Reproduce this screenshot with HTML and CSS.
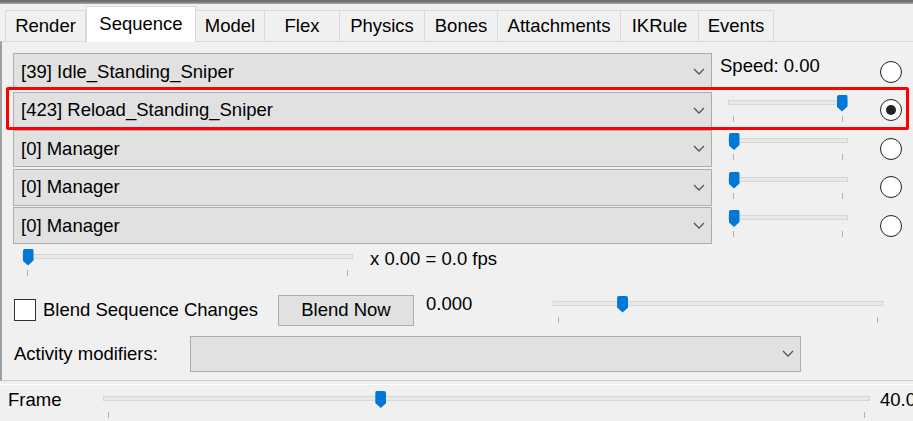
FILE: index.html
```html
<!DOCTYPE html>
<html>
  <head>
    <meta charset="UTF-8" />
    <title>Sequence</title>
    <link rel="stylesheet" href="styles.css">
  </head>
  <body>
    <div class="window">
      <div class="title-edge"></div>
      <div class="tabs">
        <div class="tab">Render</div>
        <div class="tab active">Sequence</div>
        <div class="tab">Model</div>
        <div class="tab">Flex</div>
        <div class="tab">Physics</div>
        <div class="tab">Bones</div>
        <div class="tab">Attachments</div>
        <div class="tab">IKRule</div>
        <div class="tab">Events</div>
      </div>
      <div class="page">
        <div class="seq-list">
          <div class="seq-row">
            <div class="combo">
              <span>[39] Idle_Standing_Sniper</span>
              <svg class="chevron" width="12" height="7" viewBox="0 0 12 7"><polyline points="1,1 6,6 11,1" /></svg>
            </div>
            <div class="side">
              <span class="speed-text">Speed: 0.00</span>
            </div>
            <span class="radio"></span>
          </div>
          <div class="seq-row">
            <div class="combo">
              <span>[423] Reload_Standing_Sniper</span>
              <svg class="chevron" width="12" height="7" viewBox="0 0 12 7"><polyline points="1,1 6,6 11,1" /></svg>
            </div>
            <div class="side">
              <div class="slider row-slider">
                <div class="track"><div class="thumb-range"><span class="thumb" style="left: 100%"></span></div></div>
                <div class="ticks"><i></i><i></i></div>
              </div>
            </div>
            <span class="radio checked"></span>
            <div class="highlight"></div>
          </div>
          <div class="seq-row">
            <div class="combo">
              <span>[0] Manager</span>
              <svg class="chevron" width="12" height="7" viewBox="0 0 12 7"><polyline points="1,1 6,6 11,1" /></svg>
            </div>
            <div class="side">
              <div class="slider row-slider">
                <div class="track"><div class="thumb-range"><span class="thumb" style="left: 0%"></span></div></div>
                <div class="ticks"><i></i><i></i></div>
              </div>
            </div>
            <span class="radio"></span>
          </div>
          <div class="seq-row">
            <div class="combo">
              <span>[0] Manager</span>
              <svg class="chevron" width="12" height="7" viewBox="0 0 12 7"><polyline points="1,1 6,6 11,1" /></svg>
            </div>
            <div class="side">
              <div class="slider row-slider">
                <div class="track"><div class="thumb-range"><span class="thumb" style="left: 0%"></span></div></div>
                <div class="ticks"><i></i><i></i></div>
              </div>
            </div>
            <span class="radio"></span>
          </div>
          <div class="seq-row">
            <div class="combo">
              <span>[0] Manager</span>
              <svg class="chevron" width="12" height="7" viewBox="0 0 12 7"><polyline points="1,1 6,6 11,1" /></svg>
            </div>
            <div class="side">
              <div class="slider row-slider">
                <div class="track"><div class="thumb-range"><span class="thumb" style="left: 0%"></span></div></div>
                <div class="ticks"><i></i><i></i></div>
              </div>
            </div>
            <span class="radio"></span>
          </div>
        </div>

        <div class="speed-row">
          <div class="slider speed-slider">
            <div class="track"><div class="thumb-range"><span class="thumb" style="left: 0%"></span></div></div>
            <div class="ticks"><i></i><i></i></div>
          </div>
          <span class="fps-text">x 0.00 = 0.0 fps</span>
        </div>

        <div class="blend-row">
          <span class="checkbox"></span>
          <span class="check-label">Blend Sequence Changes</span>
          <button class="button">Blend Now</button>
          <span class="blend-value">0.000</span>
          <div class="slider blend-slider">
            <div class="track"><div class="thumb-range"><span class="thumb" style="left: 20%"></span></div></div>
            <div class="ticks"><i></i><i></i></div>
          </div>
        </div>

        <div class="activity-row">
          <span class="activity-label">Activity modifiers:</span>
          <div class="combo activity-combo">
            <span></span>
            <svg class="chevron" width="12" height="7" viewBox="0 0 12 7"><polyline points="1,1 6,6 11,1" /></svg>
          </div>
        </div>
      </div>

      <div class="frame-bar">
        <span class="frame-label">Frame</span>
        <div class="slider frame-slider">
          <div class="track"><div class="thumb-range"><span class="thumb" style="left: 36%"></span></div></div>
          <div class="ticks"><i></i><i></i></div>
        </div>
        <span class="frame-value">40.00</span>
      </div>
    </div>
  </body>
</html>
```

FILE: styles.css
```css
body {
  margin: 0;
  background-color: #f0f0f0;
  color: #000;
  font-family: "Liberation Sans", Arial, sans-serif;
  font-size: 18.5px;
}
.window {
  width: 913px;
  height: 421px;
  overflow: hidden;
}
.title-edge {
  height: 4px;
  background: linear-gradient(#666, #808080 60%, #b0b0b0);
}

/* tab strip */
.tabs {
  display: grid;
  grid-template-columns: 81px 110px 69px 75px 85px 73px 123px 78px 75px;
  align-items: end;
  height: 37px;
  padding-left: 5px;
}
.tab {
  height: 31px;
  box-sizing: border-box;
  border-top: 1px solid #d9d9d9;
  border-right: 1px solid #d9d9d9;
  display: flex;
  align-items: center;
  justify-content: center;
  white-space: nowrap;
}
.tab:first-child {
  border-left: 1px solid #d9d9d9;
}
.tab.active {
  height: 36px;
  margin-bottom: -1px;
  padding-bottom: 1px;
  background-color: #fff;
  border-left: 1px solid #d9d9d9;
  position: relative;
  z-index: 1;
}

/* page */
.page {
  height: 340px;
  box-sizing: border-box;
  padding: 11px 0 0 11px;
  border-top: 1px solid #d9d9d9;
  border-left: 2px solid #a0a0a0;
  border-bottom: 1px solid #cbcbcb;
}
.seq-row {
  display: flex;
  align-items: center;
  height: 37px;
  margin-bottom: 1.5px;
  position: relative;
}
.combo {
  width: 699px;
  height: 37px;
  box-sizing: border-box;
  flex-shrink: 0;
  background-color: #e1e1e1;
  border: 1px solid #adadad;
  display: flex;
  align-items: center;
  justify-content: space-between;
  padding: 0 6px 0 7px;
  white-space: nowrap;
}
.chevron {
  fill: none;
  stroke: #555;
  stroke-width: 1.3;
}
.side {
  width: 150px;
  margin-left: 8px;
  align-self: stretch;
  display: flex;
  align-items: flex-start;
}
.speed-text {
  line-height: 20px;
  margin-top: 3px;
  white-space: nowrap;
}
.radio {
  width: 22px;
  height: 22px;
  box-sizing: border-box;
  margin-left: 10px;
  border-radius: 50%;
  border: 1px solid #222;
  background-color: #fff;
  display: flex;
  align-items: center;
  justify-content: center;
}
.radio.checked::after {
  content: "";
  width: 10px;
  height: 10px;
  border-radius: 50%;
  background-color: #222;
}
.highlight {
  position: absolute;
  left: -7px;
  top: -5px;
  width: 903px;
  height: 43px;
  box-sizing: border-box;
  border: 3px solid #f00;
  border-radius: 2px;
  pointer-events: none;
}

/* trackbars */
.slider {
  padding-top: 8px;
  flex-shrink: 0;
}
.track {
  position: relative;
  height: 5px;
  box-sizing: border-box;
  background-color: #e7e9e9;
  border: 1px solid #d6d6d6;
}
.thumb-range {
  position: absolute;
  left: 5px;
  right: 5px;
  top: -6px;
  height: 17px;
}
.thumb {
  position: absolute;
  top: 0;
  width: 11px;
  height: 17px;
  margin-left: -5.5px;
  background-color: #0078d7;
  border-radius: 2px 2px 0 0;
  clip-path: polygon(0 0, 100% 0, 100% 70%, 50% 100%, 0 70%);
}
.ticks {
  display: flex;
  justify-content: space-between;
  padding: 0 5px;
  margin-top: 11px;
}
.ticks i {
  width: 1px;
  height: 6px;
  background-color: #b0b0b0;
}
.row-slider {
  width: 120px;
  margin-left: 8px;
}

/* speed */
.speed-row {
  display: flex;
  align-items: flex-start;
  margin-top: 1px;
  padding-left: 9px;
}
.speed-slider {
  width: 331px;
}
.fps-text {
  margin-left: 17px;
  margin-top: 3px;
  line-height: 20px;
}

/* blend */
.blend-row {
  display: flex;
  align-items: center;
  height: 31px;
  margin-top: 19px;
}
.checkbox {
  width: 22px;
  height: 22px;
  box-sizing: border-box;
  flex-shrink: 0;
  margin-left: 1px;
  background-color: #fff;
  border: 1px solid #333;
}
.check-label {
  width: 235px;
  margin-left: 7px;
  white-space: nowrap;
}
.button {
  width: 136px;
  height: 31px;
  padding: 0;
  background-color: #e1e1e1;
  border: 1px solid #adadad;
  font: inherit;
  color: #000;
}
.blend-value {
  width: 127px;
  margin-left: 12px;
  align-self: flex-start;
  margin-top: -1px;
  line-height: 20px;
}
.blend-slider {
  width: 330px;
  align-self: flex-start;
  margin-top: -2px;
}

/* activity */
.activity-row {
  display: flex;
  align-items: center;
  height: 36px;
  margin-top: 10px;
}
.activity-label {
  width: 176px;
  margin-left: 1px;
  white-space: nowrap;
}
.activity-combo {
  width: 611px;
  height: 36px;
}

/* frame */
.frame-bar {
  display: flex;
  align-items: flex-start;
  margin-top: 3px;
  border-top: 1px solid #fff;
  padding: 3px 0 0 8px;
}
.frame-label {
  width: 95px;
  flex-shrink: 0;
  margin-top: 2px;
  line-height: 20px;
}
.frame-slider {
  width: 767px;
}
.frame-value {
  margin-left: 10px;
  margin-top: 2px;
  line-height: 20px;
  white-space: nowrap;
}
```
